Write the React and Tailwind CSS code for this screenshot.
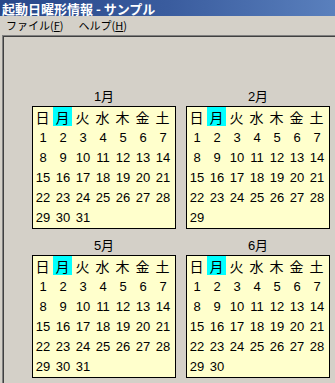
import React from 'react'

const days = ['日', '月', '火', '水', '木', '金', '土']

const months = [
  { label: '1月', length: 31 },
  { label: '2月', length: 29 },
  { label: '5月', length: 31 },
  { label: '6月', length: 30 },
]

const font = { fontFamily: '"MS UI Gothic", "Noto Sans CJK JP", "Liberation Sans", sans-serif' }
const numFont = { fontFamily: '"Liberation Sans", "Noto Sans CJK JP", sans-serif' }

function MonthBox({ label, length }) {
  const cells = Array.from({ length }, (_, i) => i + 1)
  return (
    <div className="flex flex-col w-[144px]">
      <div className="h-[16px] flex items-center justify-center text-[13px] text-black leading-none" style={numFont}>{label}</div>
      <div className="mt-[2px] h-[123px] border border-black bg-[#ffffcc] pr-[2px]">
        <div className="grid grid-cols-[repeat(7,20px)] auto-rows-[20px]">
          {days.map((d, i) => (
            <div key={d} className="flex items-start justify-start">
              <span
                className={`w-[19px] h-[19px] flex items-center justify-center text-[14px] leading-none text-black ${i === 1 ? 'bg-[#00ffff]' : ''}`}
              >
                {d}
              </span>
            </div>
          ))}
          {cells.map((n) => (
            <div key={n} className="flex items-center justify-center text-[13px] leading-none text-black" style={numFont}>
              {n}
            </div>
          ))}
        </div>
      </div>
    </div>
  )
}

export default function App() {
  return (
    <div className="w-[335px] h-[383px] overflow-hidden bg-[#d4d0c8] flex flex-col" style={font}>
      <div className="h-[16px] shrink-0 flex items-center pl-[2px] bg-gradient-to-r from-[#27478a] via-[#3a5c9e] to-[#5a80bd] text-white font-bold text-[13px] leading-none whitespace-nowrap">
        起動日曜形情報 - サンプル
      </div>
      <div className="h-[19px] shrink-0 flex items-center text-[11px] leading-none text-black">
        <span className="ml-[6px]">ファイル(<span className="underline">F</span>)</span>
        <span className="ml-[15px]">ヘルプ(<span className="underline">H</span>)</span>
      </div>
      <div className="flex-1 ml-[2px] border-t border-l border-[#808080]">
        <div className="h-full border-t border-l border-[#404040] pl-[28px] pt-[51px]">
          <div className="grid grid-cols-[144px_144px] gap-x-[10px] gap-y-[8px]">
            {months.map((m) => (
              <MonthBox key={m.label} label={m.label} length={m.length} />
            ))}
          </div>
        </div>
      </div>
    </div>
  )
}
